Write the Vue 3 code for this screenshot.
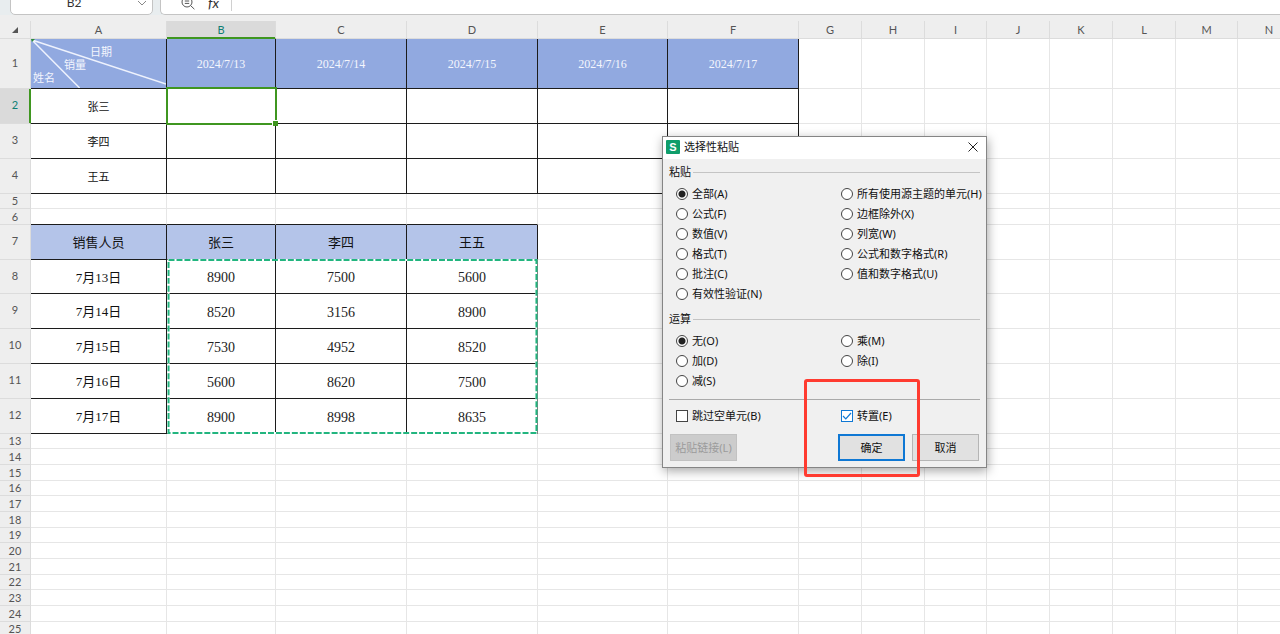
<script setup>
const cols = [
  { id: 'A', w: 136 }, { id: 'B', w: 109 }, { id: 'C', w: 131 }, { id: 'D', w: 131 },
  { id: 'E', w: 130 }, { id: 'F', w: 131 }, { id: 'G', w: 63 }, { id: 'H', w: 63 },
  { id: 'I', w: 62 }, { id: 'J', w: 63 }, { id: 'K', w: 63 }, { id: 'L', w: 63 },
  { id: 'M', w: 62 }, { id: 'N', w: 63 }
]
const heights = [50, 35, 35, 35, 15, 16, 35, 34, 35, 35, 35, 35, 15, 16, 16, 15, 16, 16, 15, 16, 16, 15, 16, 16, 15]
const values = {
  B1: '2024/7/13', C1: '2024/7/14', D1: '2024/7/15', E1: '2024/7/16', F1: '2024/7/17',
  A2: '张三', A3: '李四', A4: '王五',
  A7: '销售人员', B7: '张三', C7: '李四', D7: '王五',
  A8: '7月13日', B8: '8900', C8: '7500', D8: '5600',
  A9: '7月14日', B9: '8520', C9: '3156', D9: '8900',
  A10: '7月15日', B10: '7530', C10: '4952', D10: '8520',
  A11: '7月16日', B11: '5600', C11: '8620', D11: '7500',
  A12: '7月17日', B12: '8900', C12: '8998', D12: '8635'
}
const rows = heights.map((h, i) => ({ n: i + 1, h }))

function cellClass(ci, r) {
  const upper = r <= 4 && ci <= 5
  const lower = r >= 7 && r <= 12 && ci <= 3
  return {
    lined: upper || lower,
    'line-below': r === 6 && ci <= 3,
    date: r === 1 && upper,
    name: r > 1 && upper,
    head: r === 7 && lower,
    day: r > 7 && lower && ci === 0,
    num: r > 7 && lower && ci > 0
  }
}

const paste = [
  [['全部(A)', true], ['公式(F)'], ['数值(V)'], ['格式(T)'], ['批注(C)'], ['有效性验证(N)']],
  [['所有使用源主题的单元(H)'], ['边框除外(X)'], ['列宽(W)'], ['公式和数字格式(R)'], ['值和数字格式(U)']]
]
const calc = [
  [['无(O)', true], ['加(D)'], ['减(S)']],
  [['乘(M)'], ['除(I)']]
]
const groups = [
  { key: 'paste', title: '粘贴', columns: paste },
  { key: 'calc', title: '运算', columns: calc }
]
</script>

<template>
  <main class="app">
    <header class="bar">
      <div class="namebox">
        <input class="ref" type="text" value="B2" aria-label="名称框" />
        <svg class="chev" viewBox="0 0 10 6" aria-hidden="true"><path d="M1 1l4 4 4-4" /></svg>
      </div>
      <div class="formula">
        <svg class="lens" viewBox="0 0 14 14" aria-hidden="true">
          <circle cx="6" cy="6" r="5" /><path d="M9.6 9.6L13.4 13.2M3.8 5h4.4M3.8 7.4h4.4" />
        </svg>
        <span class="fx">fx</span>
        <input class="ftext" type="text" aria-label="编辑栏" />
      </div>
    </header>

    <div class="sheet">
      <table class="grid">
        <colgroup>
          <col class="c-head" />
          <col v-for="c in cols" :key="c.id" :style="{ width: c.w + 'px' }" />
        </colgroup>
        <thead>
          <tr>
            <th class="corner"><svg viewBox="0 0 6 6" aria-hidden="true"><path d="M6 0v6H0z" /></svg></th>
            <th v-for="c in cols" :key="c.id" scope="col" :class="['colh', { on: c.id === 'B' }]">{{ c.id }}</th>
          </tr>
        </thead>
        <tbody>
          <tr v-for="r in rows" :key="r.n" :style="{ height: r.h + 'px' }">
            <th scope="row" :class="['rowh', { on: r.n === 2, tall: r.h > 20 }]">{{ r.n }}</th>
            <td v-for="(c, ci) in cols" :key="c.id" :class="cellClass(ci, r.n)">
              <div v-if="r.n === 1 && ci === 0" class="diag">
                <svg viewBox="0 0 136 50" preserveAspectRatio="none" aria-hidden="true">
                  <path class="rays" d="M1 1L136 46M1 1L49 50" />
                  <path class="mark" d="M0 0h4L1 3z" />
                </svg>
                <span class="d1">日期</span>
                <span class="d2">销量</span>
                <span class="d3">姓名</span>
              </div>
              <template v-else>{{ values[c.id + r.n] }}</template>
              <span v-if="c.id === 'B' && r.n === 2" class="cursor"><i></i></span>
              <svg v-if="c.id === 'B' && r.n === 8" class="ants" viewBox="0 0 372 176" aria-hidden="true">
                <rect class="under" x="1" y="1" width="370" height="174" />
                <rect class="dash" x="1" y="1" width="370" height="174" />
              </svg>
            </td>
          </tr>
        </tbody>
      </table>
    </div>

    <section class="dialog" role="dialog" aria-labelledby="dlg-title">
      <div class="title">
        <span class="logo">S</span>
        <h1 id="dlg-title">选择性粘贴</h1>
        <button class="close" type="button" aria-label="关闭">
          <svg viewBox="0 0 10 10" aria-hidden="true"><path d="M.5.5l9 9M9.5.5l-9 9" /></svg>
        </button>
      </div>
      <form class="body" @submit.prevent>
        <div v-for="g in groups" :key="g.key" class="group" role="radiogroup" :aria-labelledby="'g-' + g.key">
          <div class="ghead"><span :id="'g-' + g.key">{{ g.title }}</span></div>
          <div class="opts">
            <div v-for="(col, i) in g.columns" :key="i" class="optcol">
              <label v-for="o in col" :key="o[0]" class="opt">
                <input type="radio" :name="g.key" :checked="o[1]" /><span>{{ o[0] }}</span>
              </label>
            </div>
          </div>
        </div>
        <div class="checks">
          <label class="opt"><input type="checkbox" /><span>跳过空单元(B)</span></label>
          <label class="opt"><input type="checkbox" checked /><span>转置(E)</span></label>
        </div>
        <div class="buttons">
          <button class="btn link" type="button" disabled>粘贴链接(L)</button>
          <button class="btn ok" type="submit">确定</button>
          <button class="btn" type="button">取消</button>
        </div>
      </form>
      <span class="callout"></span>
    </section>
  </main>
</template>

<style>
body {
  margin: 0;
  overflow: hidden;
}
</style>

<style scoped>
* {
  box-sizing: border-box;
}
.app {
  position: relative;
  height: 100vh;
  overflow: hidden;
  background: #fff;
  font-family: "Noto Sans", "Noto Sans CJK SC", sans-serif;
  font-size: 11px;
  color: #111;
}
.bar {
  display: flex;
  align-items: flex-end;
  gap: 7px;
  height: 15px;
  padding-left: 10px;
  overflow: hidden;
  background: #e8edef;
}
.namebox,
.formula {
  display: flex;
  align-items: center;
  height: 24px;
  background: #fff;
  border: 1px solid #c4c4c4;
}
.namebox {
  width: 143px;
  flex: none;
  padding-right: 5px;
  border-radius: 5px;
}
.formula {
  flex: 1;
  padding-left: 20px;
  border-right: 0;
  border-radius: 5px 0 0 5px;
}
.ref,
.ftext {
  flex: 1;
  min-width: 0;
  padding: 0;
  border: 0;
  outline: 0;
  background: none;
  font: 12px/16px Lato, sans-serif;
  color: #333;
  text-align: center;
}
.chev {
  width: 10px;
  height: 6px;
  fill: none;
  stroke: #888;
}
.lens {
  width: 14px;
  height: 14px;
  fill: none;
  stroke: #555;
}
.fx {
  width: 36px;
  padding-left: 13px;
  font: italic 14px/10px Lato, sans-serif;
  color: #333;
}
.ftext {
  border-left: 1px solid #d0d0d0;
  text-align: left;
}
.sheet {
  padding-top: 6px;
  background: #eee;
}
.grid {
  width: 0;
  table-layout: fixed;
  border-collapse: separate;
  border-spacing: 0;
  background: #fff;
}
.c-head {
  width: 31px;
}
th,
td {
  padding: 0;
  border-right: 1px solid #e6e6e6;
  border-bottom: 1px solid #e6e6e6;
  text-align: center;
  vertical-align: middle;
  white-space: nowrap;
}
th {
  background: #eee;
  border-color: #dcdcdc;
  font: 11px/14px Lato, sans-serif;
  color: #555;
}
thead tr {
  height: 18px;
}
.tall {
  padding-bottom: 2px;
}
.corner svg {
  display: block;
  width: 6px;
  height: 6px;
  margin: 0 auto;
  fill: #555;
}
.colh.on,
.rowh.on {
  background: #dadada;
  color: #0f7f74;
}
.colh.on {
  border-bottom-color: #3f9620;
  box-shadow: inset 0 -1px #3f9620;
}
.rowh.on {
  border-right-color: #3f9620;
  box-shadow: inset -1px 0 #3f9620;
}
td {
  position: relative;
  line-height: 14px;
}
.lined {
  border-color: #1c1c1c;
}
.line-below {
  border-bottom-color: #1c1c1c;
}
.date {
  background: #91a9e0;
  color: #f4f6fd;
  font-family: "Liberation Serif", "Noto Sans CJK SC", serif;
  font-size: 12px;
}
.name {
  padding-top: 1px;
  font-size: 11px;
}
.head {
  background: #b4c4e9;
  font-size: 13px;
}
.day {
  padding-top: 2px;
  font-family: "Liberation Serif", "Noto Sans CJK SC", serif;
  font-size: 13px;
}
.num {
  padding-top: 3px;
  font-family: "Liberation Serif", serif;
  font-size: 14px;
  color: #222;
}
.diag {
  display: flex;
  flex-direction: column;
  height: 49px;
  padding-top: 6px;
  font: 11px/13px "Noto Sans CJK SC", sans-serif;
  text-align: left;
}
.diag svg {
  position: absolute;
  inset: 0;
  width: 100%;
  height: 100%;
}
.rays {
  fill: none;
  stroke: #eef2fd;
  stroke-width: 1.5;
}
.mark {
  fill: #2e8b3a;
}
.d1 {
  padding-left: 59px;
}
.d2 {
  padding-left: 33px;
}
.d3 {
  padding-left: 2px;
}
.cursor {
  position: absolute;
  z-index: 1;
  inset: -2px -2px -2px -1px;
  border: 2px solid #3f9620;
}
.cursor i {
  position: absolute;
  right: -3px;
  bottom: -3px;
  width: 6px;
  height: 6px;
  background: #3f9620;
  border: 1px solid #fff;
  border-width: 1px 0 0 1px;
}
.ants {
  position: absolute;
  z-index: 1;
  top: -1px;
  left: 0;
  width: 371px;
  height: 175px;
  fill: none;
}
.under {
  stroke: #fff;
  stroke-width: 2;
}
.dash {
  stroke: #22b57f;
  stroke-width: 2;
  stroke-dasharray: 6 2;
}
.dialog {
  position: absolute;
  z-index: 5;
  top: 136px;
  left: 662px;
  width: 325px;
  background: #f0f0f0;
  border: 1px solid #858585;
  box-shadow: 1px 3px 10px rgba(0, 0, 0, 0.35);
}
.title {
  display: flex;
  align-items: center;
  gap: 4px;
  height: 22px;
  padding: 0 8px 2px 3px;
  background: #fff;
}
.logo {
  width: 14px;
  height: 14px;
  border-radius: 1px;
  background: #0f9d6b;
  color: #fff;
  font: bold 11px/14px "Liberation Sans", sans-serif;
  text-align: center;
}
h1 {
  flex: 1;
  margin: 0;
  font-size: 11px;
  line-height: 16px;
  font-weight: 400;
}
.close {
  display: flex;
  padding: 0;
  border: 0;
  background: none;
}
.close svg {
  width: 10px;
  height: 10px;
  fill: none;
  stroke: #222;
}
.body {
  padding: 5px 6px 6px;
}
.ghead {
  display: flex;
  align-items: center;
  gap: 2px;
  height: 16px;
  line-height: 16px;
}
.ghead::after {
  content: "";
  flex: 1;
  height: 1px;
  background: #c4c4c4;
}
.group {
  margin-bottom: 7px;
}
.opts {
  display: grid;
  grid-template-columns: 165px 1fr;
  padding: 4px 0 0 7px;
}
.opt {
  display: flex;
  align-items: center;
  gap: 4px;
  height: 20px;
  white-space: nowrap;
}
.opt span {
  padding-bottom: 2px;
}
.opt input {
  appearance: none;
  flex: none;
  width: 12px;
  height: 12px;
  margin: 0;
  border: 1px solid #444;
  background: #fff;
}
.opt input[type="radio"] {
  border-radius: 50%;
}
.opt input[type="radio"]:checked {
  background: radial-gradient(circle, #222 3px, #fff 4px);
}
.opt input[type="checkbox"]:checked {
  border-color: #0f78d4;
  background: url("data:image/svg+xml,%3Csvg xmlns='http://www.w3.org/2000/svg' viewBox='0 0 10 10'%3E%3Cpath d='M1 5l2.8 2.8L9 2' fill='none' stroke='%230f78d4' stroke-width='1.2'/%3E%3C/svg%3E") #fff;
}
.checks {
  display: grid;
  grid-template-columns: 165px 1fr;
  margin-top: 8px;
  padding: 6px 0 8px 7px;
  border-top: 1px solid #aaa;
}
.buttons {
  display: flex;
  gap: 7px;
  padding: 0 1px;
}
.btn {
  width: 67px;
  height: 27px;
  padding: 0 0 2px;
  border: 1px solid #b5b5b5;
  background: #e1e1e1;
  font: inherit;
  color: #111;
}
.link {
  margin-right: auto;
  border-color: #c2c2c2;
  background: #ccc;
  color: #9b9b9b;
}
.ok {
  border: 2px solid #0f78d4;
}
.callout {
  position: absolute;
  top: 242px;
  left: 141px;
  width: 116px;
  height: 98px;
  border: 3px solid #ff3b30;
  border-radius: 3px;
  pointer-events: none;
}
</style>
